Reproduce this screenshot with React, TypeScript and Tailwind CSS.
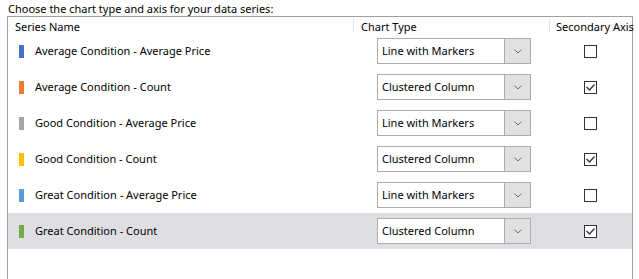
import React from 'react';

interface Series {
    name: string;
    color: string;
    chart: string;
    secondary: boolean;
}

const series: Series[] = [
    { name: 'Average Condition - Average Price', color: 'bg-[#4472c4]', chart: 'Line with Markers', secondary: false },
    { name: 'Average Condition - Count', color: 'bg-[#ed7d31]', chart: 'Clustered Column', secondary: true },
    { name: 'Good Condition - Average Price', color: 'bg-[#a5a5a5]', chart: 'Line with Markers', secondary: false },
    { name: 'Good Condition - Count', color: 'bg-[#ffc000]', chart: 'Clustered Column', secondary: true },
    { name: 'Great Condition - Average Price', color: 'bg-[#5b9bd5]', chart: 'Line with Markers', secondary: false },
    { name: 'Great Condition - Count', color: 'bg-[#70ad47]', chart: 'Clustered Column', secondary: true },
];

const ChartSelect: React.FC<{ value: string }> = ({ value }) => (
    <div className="flex h-[26px] w-[154px] border border-[#adadad] bg-white">
        <div className="flex flex-1 items-center pl-[4px] pt-[1px] text-black">{value}</div>
        <div className="flex w-[26px] items-center justify-center border-l border-[#adadad] bg-[#e1e1e1]">
            <svg width="8" height="5" viewBox="0 0 8 5" fill="none">
                <path d="M0.5 0.5 L4 4 L7.5 0.5" stroke="#707070" strokeWidth="1" />
            </svg>
        </div>
    </div>
);

const CheckBox: React.FC<{ checked: boolean }> = ({ checked }) => (
    <div className="flex h-[13px] w-[13px] items-center justify-center border border-[#333333] bg-white">
        {checked && (
            <svg width="11" height="11" viewBox="0 0 11 11" fill="none">
                <path d="M1.5 5 L4.5 8 L9.5 2.5" stroke="#333333" strokeWidth="1.3" />
            </svg>
        )}
    </div>
);

const App: React.FC = () => {
    return (
        <div className="h-[279px] w-[639px] overflow-hidden bg-white pl-[7px] pr-[6px] font-['Noto_Sans',sans-serif] text-[11px] text-black">
            <div className="h-[16px] pl-[1px] leading-[17px]">Choose the chart type and axis for your data series:</div>
            <div className="h-[300px] border-l border-r border-t border-[#a0a0a0]">
                <div className="grid h-[16px] grid-cols-[345px_196px_1fr] leading-[19px]">
                    <div className="pl-[7px]">Series Name</div>
                    <div className="flex items-start">
                        <span className="mt-[2px] h-[14px] w-px bg-[#e5e5e5]" />
                        <span className="pl-[7px]">Chart Type</span>
                    </div>
                    <div className="flex items-start">
                        <span className="mt-[2px] h-[14px] w-px bg-[#e5e5e5]" />
                        <span className="whitespace-nowrap pl-[6px]">Secondary Axis</span>
                    </div>
                </div>
                {series.map((s, i) => (
                    <div
                        key={s.name}
                        className={`grid h-[36px] grid-cols-[345px_196px_1fr] items-center ${i === series.length - 1 ? 'bg-[#dfdfe3]' : ''}`}
                    >
                        <div className="flex items-center pl-[11px]">
                            <span className={`h-[13px] w-[5px] ${s.color}`} />
                            <span className="pl-[11px] pt-[1px]">{s.name}</span>
                        </div>
                        <div className="pl-[24px]">
                            <ChartSelect value={s.chart} />
                        </div>
                        <div className="flex justify-center">
                            <CheckBox checked={s.secondary} />
                        </div>
                    </div>
                ))}
            </div>
        </div>
    );
};

export default App;
